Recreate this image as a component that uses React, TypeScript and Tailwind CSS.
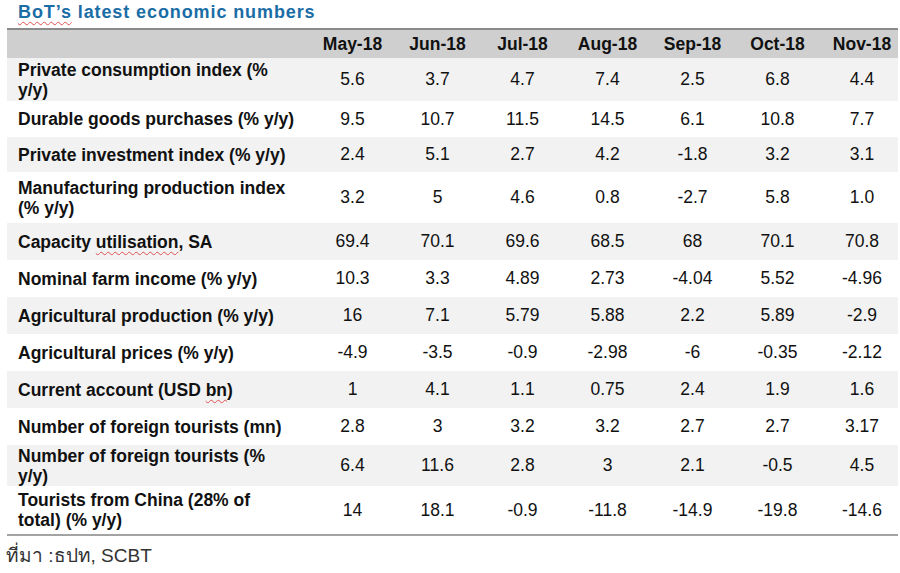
import React from "react";

type Row = { label: React.ReactNode; values: string[]; h: string; bg: string };

const months = ["May-18", "Jun-18", "Jul-18", "Aug-18", "Sep-18", "Oct-18", "Nov-18"];

const squiggle = "underline decoration-wavy decoration-[#e05050] decoration-1 underline-offset-[3px]";

const rows: Row[] = [
  { label: <>Private consumption index (%<br />y/y)</>, values: ["5.6", "3.7", "4.7", "7.4", "2.5", "6.8", "4.4"], h: "h-[43px]", bg: "bg-[#f2f2f2]" },
  { label: <>Durable goods purchases (% y/y)</>, values: ["9.5", "10.7", "11.5", "14.5", "6.1", "10.8", "7.7"], h: "h-[36px]", bg: "bg-white" },
  { label: <>Private investment index (% y/y)</>, values: ["2.4", "5.1", "2.7", "4.2", "-1.8", "3.2", "3.1"], h: "h-[35px]", bg: "bg-[#f2f2f2]" },
  { label: <>Manufacturing production index<br />(% y/y)</>, values: ["3.2", "5", "4.6", "0.8", "-2.7", "5.8", "1.0"], h: "h-[51px]", bg: "bg-white" },
  { label: <>Capacity <span className={squiggle}>utilisation</span>, SA</>, values: ["69.4", "70.1", "69.6", "68.5", "68", "70.1", "70.8"], h: "h-[37px]", bg: "bg-[#f2f2f2]" },
  { label: <>Nominal farm income (% y/y)</>, values: ["10.3", "3.3", "4.89", "2.73", "-4.04", "5.52", "-4.96"], h: "h-[37px]", bg: "bg-white" },
  { label: <>Agricultural production (% y/y)</>, values: ["16", "7.1", "5.79", "5.88", "2.2", "5.89", "-2.9"], h: "h-[37px]", bg: "bg-[#f2f2f2]" },
  { label: <>Agricultural prices (% y/y)</>, values: ["-4.9", "-3.5", "-0.9", "-2.98", "-6", "-0.35", "-2.12"], h: "h-[37px]", bg: "bg-white" },
  { label: <>Current account (USD <span className={squiggle}>bn</span>)</>, values: ["1", "4.1", "1.1", "0.75", "2.4", "1.9", "1.6"], h: "h-[37px]", bg: "bg-[#f2f2f2]" },
  { label: <>Number of foreign tourists (mn)</>, values: ["2.8", "3", "3.2", "3.2", "2.7", "2.7", "3.17"], h: "h-[37px]", bg: "bg-white" },
  { label: <>Number of foreign tourists (%<br />y/y)</>, values: ["6.4", "11.6", "2.8", "3", "2.1", "-0.5", "4.5"], h: "h-[41px]", bg: "bg-[#f2f2f2]" },
  { label: <>Tourists from China (28% of<br />total) (% y/y)</>, values: ["14", "18.1", "-0.9", "-11.8", "-14.9", "-19.8", "-14.6"], h: "h-[48px]", bg: "bg-white" },
];

const grid = "grid grid-cols-[303px_repeat(6,85px)_78px] items-center";

export default function App() {
  return (
    <div className="w-[900px] h-[573px] bg-white overflow-hidden text-[#111] font-['Liberation_Sans',Arial,sans-serif]">
      <div className="h-[28px] pl-[18px] pt-[1px] text-[18px] leading-[22px] font-bold tracking-[0.9px] text-[#1b6da6] whitespace-nowrap">
        <span className={squiggle}>BoT’s</span> latest economic numbers
      </div>
      <div className="ml-[7px] w-[891px] border-t-2 border-b-2 border-t-[#8a8a8a] border-b-[#a3a3a3]">
        <div className={`${grid} h-[28px] bg-[#cfcfcf] text-[17.5px] font-bold`}>
          <div />
          {months.map((m, i) => (
            <div key={m} className={`text-center whitespace-nowrap ${i === 6 ? "pl-[6px]" : ""}`}>{m}</div>
          ))}
        </div>
        {rows.map((r, idx) => (
          <div key={idx} className={`${grid} ${r.h} ${r.bg} text-[17.5px]`}>
            <div className="pl-[11px] font-bold leading-[20px] whitespace-nowrap">{r.label}</div>
            {r.values.map((v, i) => (
              <div key={i} className={`text-center whitespace-nowrap ${i === 6 ? "pl-[6px]" : ""}`}>{v}</div>
            ))}
          </div>
        ))}
      </div>
      <div className="pl-[6px] pt-[8px] text-[19px] leading-[24px] text-[#333] whitespace-nowrap font-['Liberation_Sans','Noto_Sans',sans-serif]">
        ที่มา :ธปท, SCBT
      </div>
    </div>
  );
}
